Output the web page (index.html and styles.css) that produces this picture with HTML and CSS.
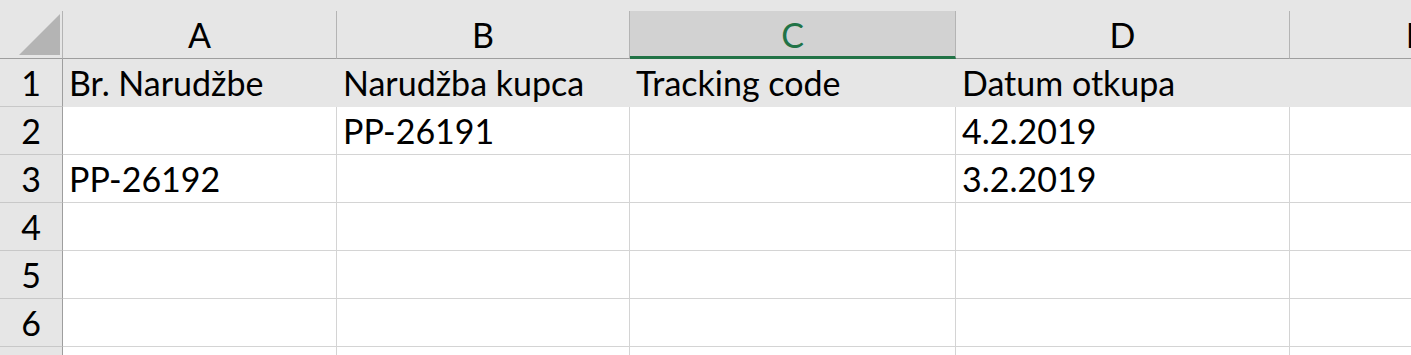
FILE: index.html
```html
<!DOCTYPE html>
<html lang="hr">
  <head>
    <meta charset="UTF-8" />
    <meta name="viewport" content="width=device-width, initial-scale=1.0" />
    <title>Narudžbe</title>
    <link rel="stylesheet" href="styles.css">
  </head>
  <body>
    <div class="sheet">
      <!-- zaglavlje stupaca -->
      <div class="corner"><span class="select-all"></span></div>
      <div class="col-head">A</div>
      <div class="col-head">B</div>
      <div class="col-head sel">C</div>
      <div class="col-head">D</div>
      <div class="col-head">E</div>

      <div class="row-head">1</div>
      <div class="cell title">Br. Narudžbe</div>
      <div class="cell title">Narudžba kupca</div>
      <div class="cell title">Tracking code</div>
      <div class="cell title">Datum otkupa</div>
      <div class="cell title"></div>

      <div class="row-head">2</div>
      <div class="cell"></div>
      <div class="cell">PP-26191</div>
      <div class="cell"></div>
      <div class="cell">4.2.2019</div>
      <div class="cell"></div>

      <div class="row-head">3</div>
      <div class="cell">PP-26192</div>
      <div class="cell"></div>
      <div class="cell"></div>
      <div class="cell">3.2.2019</div>
      <div class="cell"></div>

      <div class="row-head">4</div>
      <div class="cell"></div>
      <div class="cell"></div>
      <div class="cell"></div>
      <div class="cell"></div>
      <div class="cell"></div>

      <div class="row-head">5</div>
      <div class="cell"></div>
      <div class="cell"></div>
      <div class="cell"></div>
      <div class="cell"></div>
      <div class="cell"></div>

      <div class="row-head">6</div>
      <div class="cell"></div>
      <div class="cell"></div>
      <div class="cell"></div>
      <div class="cell"></div>
      <div class="cell"></div>

      <!-- sedmi red, samo vrh se vidi -->
      <div class="row-head"></div>
      <div class="cell"></div>
      <div class="cell"></div>
      <div class="cell"></div>
      <div class="cell"></div>
      <div class="cell"></div>
    </div>
  </body>
</html>
```

FILE: styles.css
```css
* {
  margin: 0;
  padding: 0;
  box-sizing: border-box;
}

body {
  width: 1411px;
  height: 355px;
  overflow: hidden;
  background-color: #fff;
  font-family: Lato, "Open Sans", sans-serif;
  font-size: 34px;
  line-height: 1;
  color: #000;
}

.sheet {
  display: grid;
  grid-template-columns: 63px 274px 293px 326px 334px 252px;
  grid-auto-rows: 48px;
  grid-template-rows: 59px;
  width: 1542px;
  background-color: #e6e6e6;
}

/* gornji lijevi kut - odabir svega */
.corner {
  margin-top: 11px;
  display: flex;
  justify-content: flex-end;
  align-items: flex-end;
  padding: 0 2px 3px 0;
  border-right: 1px solid #b4b4b4;
  border-bottom: 1px solid #9e9e9e;
}

.select-all {
  display: block;
  width: 41px;
  height: 41px;
  background-color: #b4b4b4;
  clip-path: polygon(100% 0, 100% 100%, 0 100%);
}

.col-head {
  margin-top: 11px;
  display: flex;
  justify-content: center;
  align-items: flex-end;
  padding-bottom: 6px;
  border-right: 1px solid #b4b4b4;
  border-bottom: 1px solid #9e9e9e;
}

.col-head.sel {
  background-color: #d2d2d2;
  color: #217346;
  padding-bottom: 4px;
  border-bottom: 3px solid #217346;
}

.row-head {
  display: flex;
  justify-content: center;
  align-items: flex-end;
  padding-bottom: 6px;
  border-right: 1px solid #9e9e9e;
  border-bottom: 1px solid #c8c8c8;
}

.cell {
  display: flex;
  align-items: flex-end;
  padding: 0 0 6px 6px;
  background-color: #fff;
  border-right: 1px solid #d4d4d4;
  border-bottom: 1px solid #d4d4d4;
  white-space: nowrap;
}

.cell.title {
  background-color: #e6e6e6;
  border-color: #e6e6e6;
}
```
